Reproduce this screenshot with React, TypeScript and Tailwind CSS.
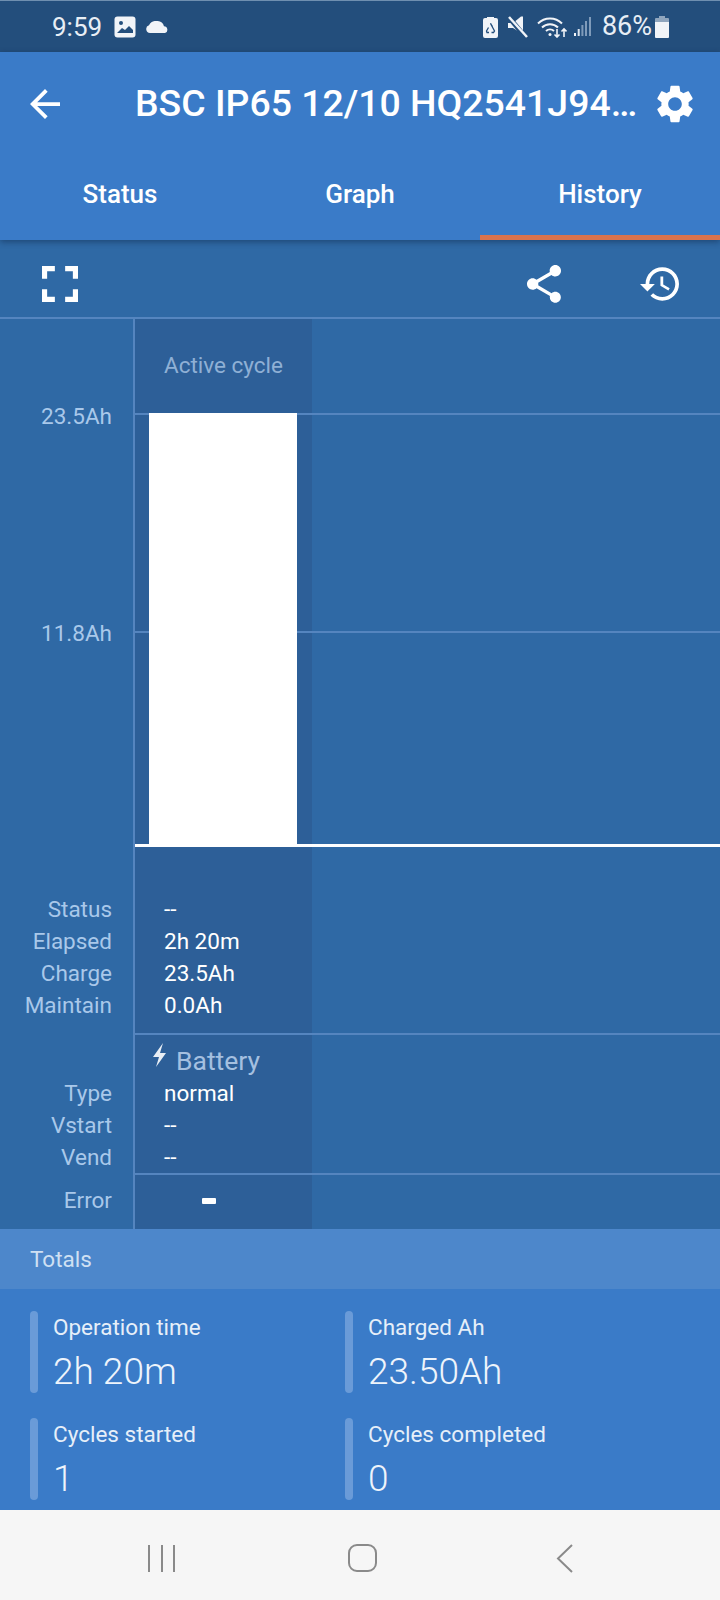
const ICONS = {
  back: 'M20 11H7.83l5.59-5.59L12 4l-8 8 8 8 1.41-1.41L7.83 13H20v-2z',
  settings:
    'M19.14 12.94c.04-.3.06-.61.06-.94 0-.32-.02-.64-.07-.94l2.03-1.58c.18-.14.23-.41.12-.61l-1.92-3.32c-.12-.22-.37-.29-.59-.22l-2.39.96c-.5-.38-1.03-.7-1.62-.94l-.36-2.54c-.04-.24-.24-.41-.48-.41h-3.84c-.24 0-.43.17-.47.41l-.36 2.54c-.59.24-1.13.57-1.62.94l-2.39-.96c-.22-.08-.47 0-.59.22L2.74 8.87c-.12.21-.08.47.12.61l2.03 1.58c-.05.3-.09.63-.09.94s.02.64.07.94l-2.03 1.58c-.18.14-.23.41-.12.61l1.92 3.32c.12.22.37.29.59.22l2.39-.96c.5.38 1.03.7 1.62.94l.36 2.54c.05.24.24.41.48.41h3.84c.24 0 .44-.17.47-.41l.36-2.54c.59-.24 1.13-.56 1.62-.94l2.39.96c.22.08.47 0 .59-.22l1.92-3.32c.12-.22.07-.47-.12-.61l-2.01-1.58zM12 15.6c-1.98 0-3.6-1.62-3.6-3.6s1.62-3.6 3.6-3.6 3.6 1.62 3.6 3.6-1.62 3.6-3.6 3.6z',
  share:
    'M18 16.08c-.76 0-1.44.3-1.96.77L8.91 12.7c.05-.23.09-.46.09-.7s-.04-.47-.09-.7l7.05-4.11c.54.5 1.25.81 2.04.81 1.66 0 3-1.34 3-3s-1.34-3-3-3-3 1.34-3 3c0 .24.04.47.09.7L8.04 9.81C7.5 9.31 6.79 9 6 9c-1.66 0-3 1.34-3 3s1.34 3 3 3c.79 0 1.5-.31 2.04-.81l7.12 4.16c-.05.21-.08.43-.08.65 0 1.61 1.31 2.92 2.92 2.92 1.61 0 2.92-1.31 2.92-2.92s-1.31-2.92-2.92-2.92z',
  history:
    'M13 3c-4.97 0-9 4.03-9 9H1l3.89 3.89.07.14L9 12H6c0-3.87 3.13-7 7-7s7 3.13 7 7-3.13 7-7 7c-1.93 0-3.68-.79-4.94-2.06l-1.42 1.42C8.27 19.99 10.51 21 13 21c4.97 0 9-4.03 9-9s-4.03-9-9-9zm-1 5v5l4.28 2.54.72-1.21-3.5-2.08V8H12z',
  fullscreen: 'M7 14H5v5h5v-2H7v-3zm-2-4h2V7h3V5H5v5zm12 7h-3v2h5v-5h-2v3zM14 5v2h3v3h2V5h-5z',
  bolt: 'M10 0L0 14h6L3 24 13 10H7z',
};

const Icon = ({ d, box, className }: { d: string; box: string; className: string }) => (
  <svg viewBox={box} fill="currentColor" className={className}>
    <path d={d} />
  </svg>
);

const StatusBar = () => (
  <div className="flex h-[52px] shrink-0 items-center border-t border-[#6f8fb0] bg-[#234e7c] pl-[52px] pr-[51px] text-[#e8eef5]">
    <span className="text-[26px] leading-none">9:59</span>
    <svg viewBox="0 0 22 22" className="ml-[12px] h-[22px] w-[22px]">
      <rect x="0.5" y="0.5" width="21" height="21" rx="3" fill="#f1f4f8" />
      <circle cx="7" cy="7" r="2" fill="#234e7c" />
      <path d="M3 17l5-5 3 2 4-4 4 4v3H3z" fill="#234e7c" />
    </svg>
    <svg viewBox="0 0 24 12" className="ml-[9px] h-[12px] w-[24px]">
      <path d="M5 12a4 4 0 0 1-1-7.8A8 8 0 0 1 12 0a7 7 0 0 1 7 5.2A3.5 3.5 0 0 1 20 12z" fill="#f1f4f8" />
    </svg>
    <div className="ml-auto flex items-center">
      <svg viewBox="0 0 15 22" className="h-[22px] w-[15px]">
        <path d="M4 2V1h7v1h2a2 2 0 0 1 2 2v16a2 2 0 0 1-2 2H2a2 2 0 0 1-2-2V4a2 2 0 0 1 2-2z" fill="#f1f4f8" />
        <path d="M7.500 7.500L11.500 15l-1 1.500H8.500M6 16.500H4L3.500 15l2-3.500M9.500 10.500l-2-3" fill="none" stroke="#234e7c" strokeWidth="1.300" />
      </svg>
      <svg viewBox="0 0 21 22" className="ml-[10px] h-[22px] w-[21px]">
        <path d="M0 7h5l8-6.500h2V17h-2l-8-5H0z" fill="#f1f4f8" />
        <path d="M-1 -1L19 23" stroke="#234e7c" strokeWidth="5" />
        <path d="M1 1l18 20" stroke="#f1f4f8" strokeWidth="2.500" />
      </svg>
      <svg viewBox="0 0 30 22" className="ml-[8px] h-[22px] w-[30px]" fill="none" stroke="#f1f4f8" strokeWidth="2">
        <path d="M1 7.500a17 17 0 0 1 24 0M5 11.500a11.500 11.500 0 0 1 16 0M9 15a6 6 0 0 1 8 0" />
        <circle cx="13" cy="18.500" r="1.500" fill="#f1f4f8" stroke="none" />
        <path d="M20 13v8m-2.500-2.500L20 21l2.500-2.500M27 21v-8m-2.500 2.500L27 13l2.500 2.500" strokeWidth="1.600" />
      </svg>
      <svg viewBox="0 0 17 22" className="ml-[7px] h-[22px] w-[17px]" fill="#7f9bba">
        <rect x="0" y="17" width="2" height="3" fill="#f1f4f8" />
        <rect x="3.700" y="13" width="2" height="7" fill="#dbe4ee" />
        <rect x="7.400" y="9" width="2" height="11" />
        <rect x="11" y="5" width="2" height="15" />
        <rect x="15" y="1" width="2" height="19" />
      </svg>
      <span className="ml-[11px] text-[27px] leading-none">86%</span>
      <svg viewBox="0 0 14 22" className="ml-[3px] h-[22px] w-[14px]">
        <path d="M4 0h6v2H4z" fill="#8fa5bd" />
        <path d="M1 2h12a1 1 0 0 1 1 1v3H0V3a1 1 0 0 1 1-1z" fill="#8fa5bd" />
        <path d="M0 6h14v15a1 1 0 0 1-1 1H1a1 1 0 0 1-1-1z" fill="#f1f4f8" />
      </svg>
    </div>
  </div>
);

const Header = () => (
  <div className="relative z-10 h-[188px] shrink-0 bg-[#3a7bc8] text-white shadow-[0_2px_6px_rgba(10,30,60,0.45)]">
    <div className="flex h-[103px] items-center pl-[30px] pr-[27px]">
      <Icon d={ICONS.back} box="4 4 16 16" className="h-[30px] w-[30px] shrink-0" />
      <span className="ml-[75px] whitespace-nowrap text-[37.400px] font-medium leading-none">BSC IP65 12/10 HQ2541J94…</span>
      <Icon d={ICONS.settings} box="2.500 2 19 20" className="ml-auto h-[38px] w-[36px] shrink-0" />
    </div>
    <div className="grid h-[85px] grid-cols-3">
      <div className="flex items-center justify-center pb-[7px] text-[26px] font-medium">Status</div>
      <div className="flex items-center justify-center pb-[7px] text-[26px] font-medium">Graph</div>
      <div className="flex items-center justify-center border-b-[5px] border-[#d9734e] pb-[2px] text-[26px] font-medium">History</div>
    </div>
  </div>
);

const Toolbar = () => (
  <div className="flex h-[77px] shrink-0 items-center bg-[#2f69a5] pl-[42px] pr-[41px] pt-[10px] text-white">
    <Icon d={ICONS.fullscreen} box="5 5 14 14" className="h-[36px] w-[36px]" />
    <Icon d={ICONS.share} box="3 2 18 20" className="ml-auto h-[38px] w-[34px]" />
    <Icon d={ICONS.history} box="1 3 21 18" className="ml-[79px] h-[34px] w-[39px]" />
  </div>
);

const Labels = ({ items }: { items: string[] }) => (
  <>
    {items.map((label, i) => (
      <div key={i} className="h-[32px] text-[22.500px] leading-[32px]">
        {label}
      </div>
    ))}
  </>
);

const gridLine = 'col-span-2 col-start-2 border-t-2 border-[#5585bf]';

const HistoryChart = () => (
  <div className="grid shrink-0 grid-cols-[135px_177px_1fr] grid-rows-[94px_218px_213px_3px_186px_140px_56px] border-t-2 border-[#5585bf] bg-[#2f69a5] text-[#a9c8ea]">
    {/* axis column and active cycle column, behind everything else */}
    <div className="col-start-1 row-span-7 row-start-1 border-r-2 border-[#5585bf]" />
    <div className="col-start-2 row-span-7 row-start-1 bg-[#2d5f98]" />

    <div className="col-start-2 row-start-1 pt-[30px] text-center text-[22.500px] leading-[32px] text-[#8fb0d5]">Active cycle</div>

    <div className={`${gridLine} row-start-2`} />
    <div className={`${gridLine} row-start-3`} />
    <div className="z-10 col-start-2 row-span-2 row-start-2 ml-[14px] mr-[15px] bg-white" />
    <div className="col-start-1 row-start-2 -mt-[9px] pr-[23px] text-right text-[22.500px] leading-[24px]">23.5Ah</div>
    <div className="col-start-1 row-start-3 -mt-[10px] pr-[23px] text-right text-[22.500px] leading-[24px]">11.8Ah</div>
    <div className="col-span-2 col-start-2 row-start-4 bg-white" />

    <div className="col-start-1 row-start-5 flex flex-col justify-end pb-[12px] pr-[23px] text-right">
      <Labels items={['Status', 'Elapsed', 'Charge', 'Maintain']} />
    </div>
    <div className="col-start-2 row-start-5 flex flex-col justify-end pb-[12px] pl-[29px] text-white">
      <Labels items={['--', '2h 20m', '23.5Ah', '0.0Ah']} />
    </div>

    <div className={`${gridLine} row-start-6`} />
    <div className="col-start-1 row-start-6 flex flex-col justify-end pr-[23px] text-right">
      <Labels items={['Type', 'Vstart', 'Vend']} />
    </div>
    <div className="col-start-2 row-start-6 flex flex-col justify-end pl-[29px] text-white">
      <div className="flex h-[44px] items-start text-[26.500px] leading-[44px] text-[#a5c0e0]">
        <Icon d={ICONS.bolt} box="0 0 13 24" className="-ml-[11px] mt-[10px] h-[24px] w-[13px] text-[#e8eef5]" />
        <span className="ml-[10px] mt-[6px]">Battery</span>
      </div>
      <Labels items={['normal', '--', '--']} />
    </div>

    <div className={`${gridLine} row-start-7`} />
    <div className="col-start-1 row-start-7 flex items-center justify-end pr-[23px] text-[22.500px]">Error</div>
    <div className="col-start-2 row-start-7 flex items-center justify-center pr-[29px]">
      <span className="h-[6px] w-[14px] rounded-[1px] bg-white" />
    </div>
  </div>
);

const Stat = ({ label, value }: { label: string; value: string }) => (
  <div className="flex h-[82px] gap-[15px]">
    <div className="w-[8px] rounded-full bg-[#6a9bd8]" />
    <div className="pt-[3px]">
      <div className="text-[22.500px] leading-[26px] text-[#e6eff9]">{label}</div>
      <div className="mt-[10px] text-[37px] font-light leading-[44px] text-[#eef4fb]">{value}</div>
    </div>
  </div>
);

const Totals = () => (
  <>
    <div className="flex h-[60px] shrink-0 items-center bg-[#4d87cb] pl-[30px] pt-[1px] text-[22.500px] text-[#cfe0f3]">Totals</div>
    <div className="grid h-[221px] shrink-0 grid-cols-[315px_1fr] content-start gap-y-[25px] bg-[#3a7bc8] pl-[30px] pt-[22px]">
      <Stat label="Operation time" value="2h 20m" />
      <Stat label="Charged Ah" value="23.50Ah" />
      <Stat label="Cycles started" value="1" />
      <Stat label="Cycles completed" value="0" />
    </div>
  </>
);

const NavBar = () => (
  <div className="flex h-[90px] shrink-0 items-center bg-[#f6f6f6] pl-[148px] pt-[6px]">
    <div className="flex h-[27px] w-[27px] justify-between">
      <span className="w-[2px] bg-[#8a8a8a]" />
      <span className="w-[2px] bg-[#8a8a8a]" />
      <span className="w-[2px] bg-[#8a8a8a]" />
    </div>
    <div className="ml-[173px] h-[28px] w-[29px] rounded-[9px] border-2 border-[#8a8a8a]" />
    <svg viewBox="0 0 17 29" className="ml-[179px] h-[29px] w-[17px]" fill="none" stroke="#8a8a8a" strokeWidth="2">
      <path d="M16 1L2 14.500 16 28" />
    </svg>
  </div>
);

export default function App() {
  return (
    <div className="flex h-[1600px] w-[720px] flex-col overflow-hidden font-['Roboto',sans-serif]">
      <StatusBar />
      <Header />
      <Toolbar />
      <HistoryChart />
      <Totals />
      <NavBar />
    </div>
  );
}
